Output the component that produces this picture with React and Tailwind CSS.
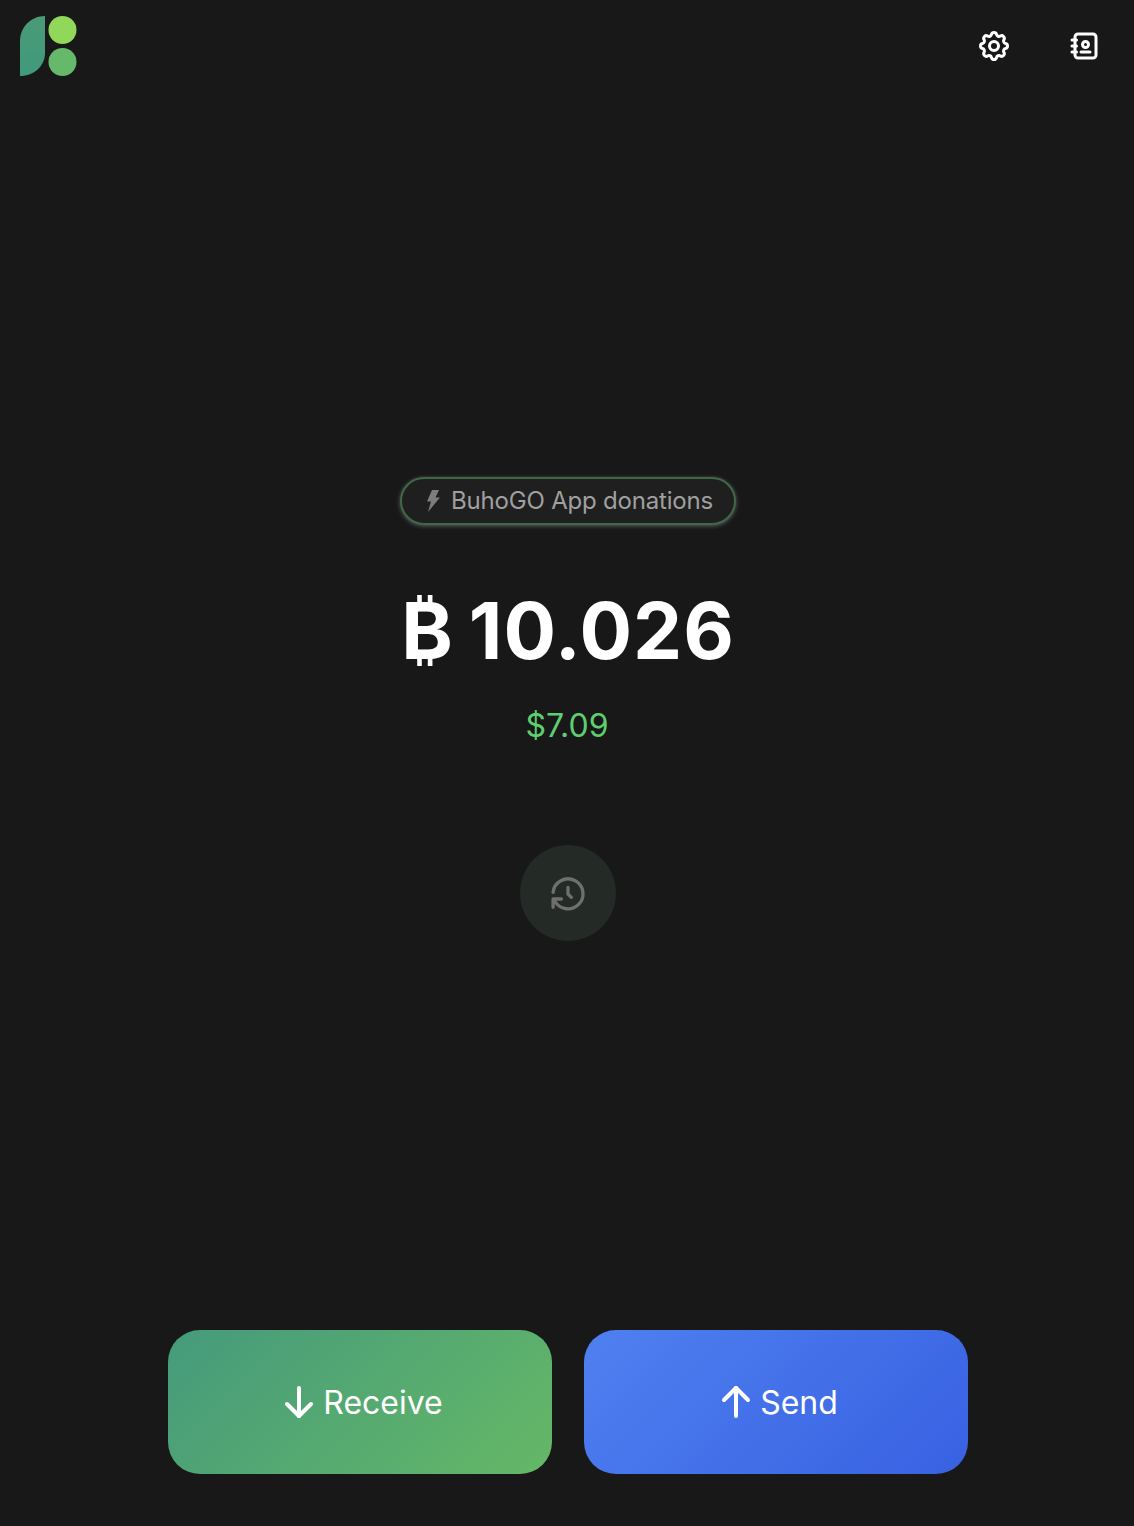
import { TbSettings, TbAddressBook, TbHistory, TbArrowDown, TbArrowUp } from 'react-icons/tb';

function Logo() {
  return (
    <svg width="57" height="60" viewBox="0 0 57 60" fill="none">
      <defs>
        <linearGradient id="leaf" x1="0" y1="0" x2="0" y2="1">
          <stop offset="0" stopColor="#4b9a78" />
          <stop offset="1" stopColor="#3f9a7c" />
        </linearGradient>
      </defs>
      <path d="M25 0V37C25 50 14 60 0 60V25C0 11 11 0 25 0Z" fill="url(#leaf)" />
      <circle cx="42.5" cy="14" r="14" fill="#90d75a" />
      <circle cx="42.5" cy="46" r="14" fill="#66b96a" />
    </svg>
  );
}

export default function App() {
  return (
    <div className="min-h-screen bg-[#181818] flex flex-col font-['Inter','Noto_Sans',sans-serif]">
      {/* Header */}
      <div className="flex items-center justify-between pl-5 pr-[32px] pt-4">
        <Logo />
        <div className="flex items-center gap-[54px] text-white">
          <TbSettings size={36} strokeWidth={2} />
          <TbAddressBook size={36} strokeWidth={2} />
        </div>
      </div>

      {/* Balance */}
      <div className="flex flex-col items-center pt-[401px] pl-[2px]">
        <div className="h-[48px] w-[336px] pl-[2px] rounded-full border-2 border-[#3c6a47] bg-[#1f1f1f] shadow-[0_1px_4px_rgba(255,255,255,0.3)] flex items-center justify-center gap-[10px] text-[#a0a0a0]">
          <svg width="16" height="24" viewBox="0 0 16 24" fill="#7d7d7d">
            <path d="M7 1H14L10.5 8.5H15L3 23L6 12.5H2Z" />
          </svg>
          <span className="text-[24px] leading-none tracking-[-0.2px]">BuhoGO App donations</span>
        </div>

        <div className="mt-[54px] h-[104px] flex items-center gap-[16px] text-white font-bold text-[78px] leading-none">
          <span>₿</span>
          <span className="tracking-[1px]">10.026</span>
        </div>

        <div className="mt-[21px] -ml-[2px] text-[#5fce72] text-[32px] leading-[44px]">$7.09</div>

        <div className="mt-[97px] pt-[1px] w-[96px] h-[96px] rounded-full bg-[#242a26] flex items-center justify-center text-[#6f6f6f]">
          <TbHistory size={40} strokeWidth={2} />
        </div>
      </div>

      {/* Actions */}
      <div className="mt-[389px] pl-[2px] flex justify-center gap-8">
        <button className="w-[384px] h-[144px] pr-[2px] rounded-[32px] bg-[linear-gradient(135deg,#459a7c,#65b866)] flex items-center justify-center text-white text-[32px]">
          <TbArrowDown size={48} strokeWidth={2} />
          <span className="mt-[2px]">Receive</span>
        </button>
        <button className="w-[384px] h-[144px] pr-[2px] rounded-[32px] bg-[linear-gradient(135deg,#4f80f0,#3861e2)] flex items-center justify-center text-white text-[32px]">
          <TbArrowUp size={48} strokeWidth={2} />
          <span className="mt-[2px]">Send</span>
        </button>
      </div>
    </div>
  );
}
